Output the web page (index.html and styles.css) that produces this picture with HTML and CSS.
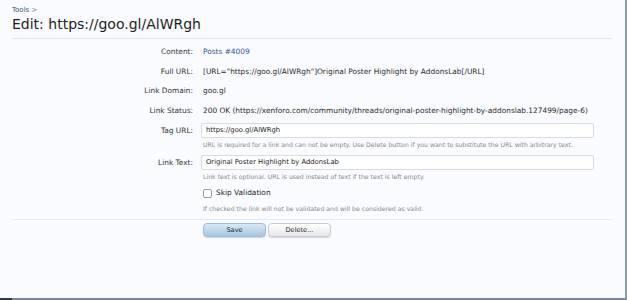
FILE: index.html
```html
<!DOCTYPE html>
<html lang="en">
<head>
  <meta charset="UTF-8">
  <title>Edit: https://goo.gl/AlWRgh</title>
  <link rel="stylesheet" href="styles.css">
</head>
<body>

  <div class="page">
    <div class="content">
      <div class="breadcrumb"><a href="#">Tools</a> &gt;</div>
      <h1 class="title">Edit: https://goo.gl/AlWRgh</h1>

      <form class="xen-form">
        <div class="ctrl-unit">
          <div class="label">Content:</div>
          <div class="value"><a href="#">Posts #4009</a></div>
        </div>
        <div class="ctrl-unit">
          <div class="label">Full URL:</div>
          <div class="value">[URL="https://goo.gl/AlWRgh"]Original Poster Highlight by AddonsLab[/URL]</div>
        </div>
        <div class="ctrl-unit">
          <div class="label">Link Domain:</div>
          <div class="value">goo.gl</div>
        </div>
        <div class="ctrl-unit">
          <div class="label">Link Status:</div>
          <div class="value">200 OK (https://xenforo.com/community/threads/original-poster-highlight-by-addonslab.127499/page-6)</div>
        </div>

        <div class="ctrl-unit input-unit first-input">
          <div class="label">Tag URL:</div>
          <div class="field">
            <input class="text-ctrl" type="text" value="https://goo.gl/AlWRgh">
            <p class="explain">URL is required for a link and can not be empty. Use Delete button if you want to substitute the URL with arbitrary text.</p>
          </div>
        </div>
        <div class="ctrl-unit input-unit">
          <div class="label">Link Text:</div>
          <div class="field">
            <input class="text-ctrl" type="text" value="Original Poster Highlight by AddonsLab">
            <p class="explain">Link text is optional. URL is used instead of text if the text is left empty.</p>
          </div>
        </div>
        <div class="ctrl-unit">
          <div class="label"></div>
          <div class="field">
            <label class="check"><span class="box"></span>Skip Validation</label>
            <p class="explain">If checked the link will not be validated and will be considered as valid.</p>
          </div>
        </div>

        <div class="submit-unit">
          <button type="button" class="button primary">Save</button>
          <button type="button" class="button">Delete...</button>
        </div>
      </form>
    </div>
    <div class="bottom-strip"></div>
  </div>

</body>
</html>
```

FILE: styles.css
```css
body { margin: 0; background: #fafbff; font-family: "DejaVu Sans", Verdana, sans-serif; color: #2f2f2f; }
.page { height: 300px; display: flex; flex-direction: column; border-right: 2px solid #8f9aa5; box-sizing: border-box; }
.content { flex: 1; padding: 0 13px 0 12px; }
.bottom-strip { height: 2px; background: linear-gradient(to right, #2d3d44 12px, #7b8790 12px); }

.breadcrumb { font-size: 7px; line-height: 8px; padding-top: 6px; color: #6a7d90; }
.breadcrumb a { color: #3e5670; text-decoration: none; }
.title { margin: 0; font-size: 14px; font-weight: normal; line-height: 20px; color: #1e1e1e; padding-bottom: 4px; border-bottom: 1px solid #dfe6ee; }

.xen-form { padding-top: 3px; font-size: 7.4px; }
.ctrl-unit { display: grid; grid-template-columns: 181px 391px; column-gap: 8px; line-height: 19.5px; }
.label { text-align: right; color: #333; }
.value { padding-left: 2px; color: #2a2a2a; white-space: nowrap; }
.value a { color: #2f5590; text-decoration: none; }

.input-unit { line-height: 15px; margin-top: 4px; }
.first-input { margin-top: 3px; }
.text-ctrl { display: block; box-sizing: border-box; width: 393px; height: 15px; margin: 0; padding: 0 4px; font: inherit; font-size: 6.8px; color: #222; background: #fff; border: 1px solid #d6dbe2; border-radius: 2px; }
.explain { margin: 1px 0 0; padding-left: 2px; font-size: 6.2px; line-height: 12px; color: #8a8a8a; white-space: nowrap; }

.check { display: flex; align-items: center; gap: 4px; padding-left: 2px; height: 20px; line-height: 20px; font-size: 7.4px; color: #222; }
.box { width: 7px; height: 7px; border: 1px solid #9a9a9a; border-radius: 2px; background: #fff; }
.check + .explain { margin-top: 0; }

.submit-unit { margin-top: 4px; border-top: 1px solid #e3e9f0; padding: 3px 0 0 191px; display: flex; gap: 2px; }
.button { width: 63px; height: 14px; padding: 0; font: inherit; font-size: 6.6px; color: #222; border: 1px solid #c9ccd3; border-radius: 4px; background: linear-gradient(#ffffff, #e5e6eb); box-shadow: 0 1px 1px rgba(0,0,0,0.15); }
.button.primary { border-color: #9fbcd6; background: linear-gradient(#d9e9f6, #a5c7e2); }
```
